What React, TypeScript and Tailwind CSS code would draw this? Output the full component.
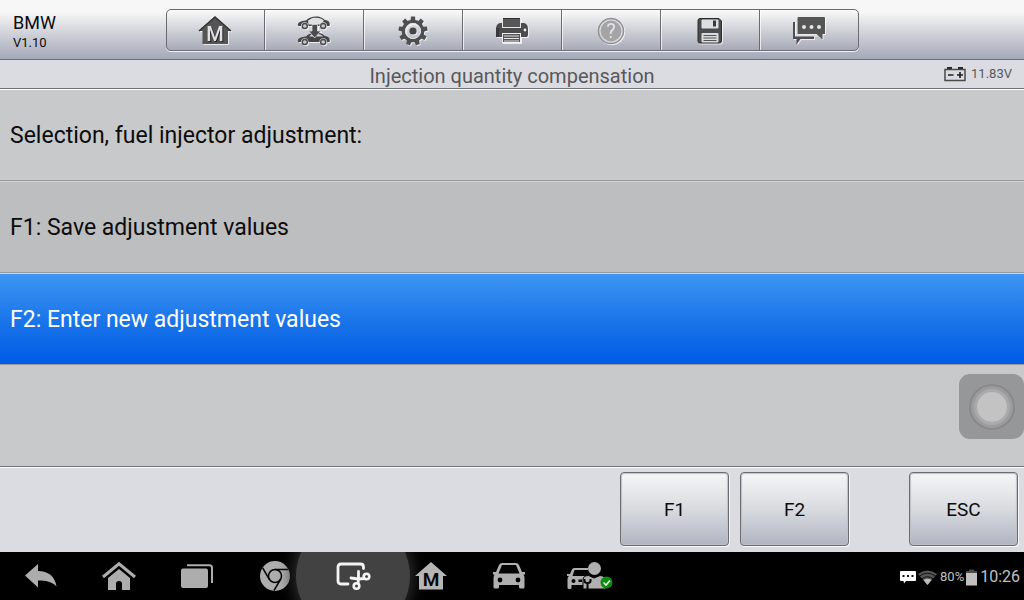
import { useState } from 'react'
import type { ReactNode } from 'react'
import clsx from 'clsx'

const GEAR_TEETH = [0, 40, 80, 120, 160, 200, 240, 280, 320]

/* ---------- toolbar icons ---------- */

function GarageIcon() {
  return (
    <svg width="34" height="30" viewBox="0 0 34 30">
      <path d="M17 1 L33 15 H30 V28 H4.500 V15 H1 Z" fill="#555556" />
      <path d="M1 15 L17 1 L33 15" fill="none" stroke="#2e2e2f" strokeWidth="1.500" />
      <text x="18" y="26" textAnchor="middle" fontSize="20" fontWeight="500" fill="#1f1f20">M</text>
      <text x="17" y="25" textAnchor="middle" fontSize="20" fontWeight="500" fill="#e2e2e6">M</text>
    </svg>
  )
}

function SmallCar({ y, filled }: { y: number; filled: boolean }) {
  return (
    <g transform={`translate(0 ${y})`}>
      <path
        d="M1 9.500 C0.500 6 4 5 9 4.500 C12 1.500 15 0.500 19 0.500 C24 0.500 26 2.500 28 4 C32 4.500 33.500 6.500 32.500 10 H30 A3.700 3.700 0 0 0 22.500 10 H11.500 A3.700 3.700 0 0 0 4 10 H1.500 Z"
        fill="#454546"
      />
      {filled ? (
        <path d="M12 4.500 C14 2.500 16 2 18 2 V4.500 Z M20 2 C23 2 25 3 26 4.500 H20 Z" fill="#d3d4d8" />
      ) : (
        <path d="M11 4.800 C14 2.200 16 1.800 18.500 1.800 C23 1.800 25 3 27 4.800 L23 8.500 H11.500 Z" fill="#dfe0e2" />
      )}
      <circle cx="7.800" cy="10" r="2.500" fill="#c9cad0" stroke="#4a4a4b" strokeWidth="1.400" />
      <circle cx="26.200" cy="10" r="2.500" fill="#c9cad0" stroke="#4a4a4b" strokeWidth="1.400" />
    </g>
  )
}

function SwapCarIcon() {
  return (
    <svg width="34" height="30" viewBox="0 0 34 30">
      <SmallCar y={0} filled={false} />
      <SmallCar y={16} filled />
      <path
        d="M15 8.500 H20.500 V15 H24 L17.700 22 L11.500 15 H15 Z"
        fill="#4c4c4d"
        stroke="#dcdde0"
        strokeWidth="0.800"
      />
    </svg>
  )
}

function GearIcon() {
  return (
    <svg width="32" height="32" viewBox="0 0 32 32">
      {GEAR_TEETH.map(a => (
        <path key={a} d="M14 1.500 H18 L18.600 7 H13.400 Z" fill="#4f4f50" transform={`rotate(${a} 16 16)`} />
      ))}
      <circle cx="16" cy="16" r="9.600" fill="none" stroke="#4f4f50" strokeWidth="3.400" />
      <circle cx="16" cy="16" r="7.500" fill="none" stroke="#e4e5e8" strokeWidth="1" />
      <circle cx="16" cy="16" r="3.600" fill="#454546" />
    </svg>
  )
}

function PrinterIcon() {
  return (
    <svg width="34" height="28" viewBox="0 0 34 28">
      <path d="M5 6 H29 Q33 7 33 12 V18 Q33 20 31 20 H3 Q1 20 1 18 V12 Q1 7 5 6 Z" fill="#4b4b4c" />
      <path d="M1 11 H4 V20 H1 Z" fill="#39393a" />
      <rect x="7.500" y="1.500" width="18" height="9" fill="#565657" stroke="#e6e6e9" />
      <path d="M8 1.500 H25" stroke="#2f2f30" />
      <rect x="7.500" y="16.500" width="18" height="9" fill="#555556" stroke="#f0f0f2" />
      <path d="M9 19 H24 M9 21.500 H24 M9 24 H24" stroke="#e2e3e6" />
      <circle cx="30" cy="13" r="1.400" fill="#ededf0" />
    </svg>
  )
}

function HelpIcon() {
  return (
    <svg width="30" height="30" viewBox="0 0 30 30">
      <circle cx="15" cy="15" r="12.800" fill="#a4a4a6" stroke="#8c8c8f" />
      <circle cx="15" cy="15" r="11" fill="none" stroke="#dcdcdf" strokeWidth="1.200" />
      <text x="15" y="22" textAnchor="middle" fontSize="20" fill="#e4e4e6">?</text>
    </svg>
  )
}

function SaveIcon() {
  return (
    <svg width="26" height="28" viewBox="0 0 26 28">
      <path d="M3 1.500 H22 L24.500 4 V24 Q24.500 26 22.500 26 H3 Q1 26 1 24 V3.500 Q1 1.500 3 1.500 Z" fill="#4c4c4d" stroke="#2c2c2d" strokeWidth="1" />
      <rect x="4.500" y="2.500" width="17" height="9" rx="1" fill="#dedfe1" />
      <rect x="16" y="3.500" width="3" height="6" fill="#3b3b3c" />
      <rect x="4.500" y="16" width="17" height="9.500" rx="1" fill="#d9dadd" />
      <path d="M6.500 18.500 H19.500 M6.500 21 H19.500 M6.500 23.500 H19.500" stroke="#545455" />
    </svg>
  )
}

function MessageIcon() {
  return (
    <svg width="34" height="30" viewBox="0 0 34 30">
      <path d="M1 6 H3 V20.500 H22 V23 H8.500 L4.500 28.500 V23 H1 Z" fill="#4f4f50" />
      <path d="M6.500 1 H32 Q33 1 33 2 V18 H30.500 V23.500 L24.500 18 H5.500 V2 Q5.500 1 6.500 1 Z" fill="#555556" />
      <path d="M4.500 4 V19 H24.500" fill="none" stroke="#e3e3e6" />
      <circle cx="12" cy="11" r="2" fill="#e4e4e7" />
      <circle cx="19.500" cy="11" r="2" fill="#e4e4e7" />
      <circle cx="27" cy="11" r="2" fill="#e4e4e7" />
    </svg>
  )
}

function VoltageIcon() {
  return (
    <svg width="22" height="15" viewBox="0 0 22 15">
      <rect x="3" y="0" width="5" height="2" fill="#262626" />
      <rect x="14" y="0" width="5" height="2" fill="#262626" />
      <rect x="1" y="2.500" width="20" height="11" fill="none" stroke="#4a4a46" strokeWidth="1.500" />
      <path d="M4 8 H9.500 M13 8 H19 M16 5 V11" stroke="#1c1c1c" strokeWidth="1.600" />
    </svg>
  )
}

/* ---------- system bar icons ---------- */

function BackIcon() {
  return (
    <svg width="34" height="26" viewBox="0 0 34 26">
      <path d="M14 1 V8 C24 8 31 13 32.500 23.500 C28 18.500 22 17.500 14 17.500 V24.500 L1 12.500 Z" fill="#adadad" />
    </svg>
  )
}

function HomeIcon() {
  return (
    <svg width="36" height="30" viewBox="0 0 36 30">
      <path d="M2 16 L18 2.800 L34 16" fill="none" stroke="#adadad" strokeWidth="3" />
      <path d="M18 8 L29 17 V29 H21 V23 A3 3 0 0 0 15 23 V29 H7 V17 Z" fill="#adadad" />
    </svg>
  )
}

function RecentsIcon() {
  return (
    <svg width="34" height="26" viewBox="0 0 34 26">
      <rect x="1" y="5.500" width="27" height="19.500" rx="2" fill="#adadad" />
      <path d="M7 2.200 H29.500 Q32 2.200 32 4.700 V20" fill="none" stroke="#adadad" strokeWidth="2" />
    </svg>
  )
}

function BrowserIcon() {
  return (
    <svg width="32" height="32" viewBox="0 0 32 32">
      <circle cx="16" cy="16" r="15" fill="#adadad" />
      <circle cx="16" cy="16" r="6.500" fill="#adadad" stroke="#050505" strokeWidth="1.500" />
      <path d="M16 9.500 H29.500 M10.300 19.300 L3.700 8 M21.600 19.300 L15 30.500" stroke="#050505" strokeWidth="1.500" />
    </svg>
  )
}

function SnipIcon() {
  return (
    <svg width="36" height="30" viewBox="0 0 36 30">
      <g fill="none" stroke="#f4f4f4" strokeWidth="2.800" strokeLinecap="round">
        <path d="M13 23 H6 Q3 23 3 20 V6 Q3 3 6 3 H25.500 Q28.500 3 28.500 6 V7.500" />
        <path d="M16 17 L23.500 18 L29.500 17.500" />
        <path d="M23.500 10.500 V18 L23 22.500" />
        <circle cx="31.500" cy="15.500" r="2.800" strokeWidth="2.600" />
        <circle cx="21.500" cy="25" r="2.800" strokeWidth="2.600" />
      </g>
    </svg>
  )
}

function NavGarageIcon() {
  return (
    <svg width="34" height="30" viewBox="0 0 34 30">
      <path d="M17 1 L33 15 H29 V28.500 H5 V15 H1 Z" fill="#b5b5b5" />
      <text x="17" y="25" textAnchor="middle" fontSize="19" fontWeight="600" fill="#050505">M</text>
    </svg>
  )
}

function CarIcon() {
  return (
    <svg width="34" height="28" viewBox="0 0 34 28">
      <path
        d="M10 1 H24 Q26 1 27 3 L30 10 H33 V12.500 H31.500 Q32.500 14 32.500 16 V25 Q32.500 26.500 31 26.500 H28.500 Q27 26.500 27 25 V23 H7 V25 Q7 26.500 5.500 26.500 H3 Q1.500 26.500 1.500 25 V16 Q1.500 14 2.500 12.500 H1 V10 H4 L7 3 Q8 1 10 1 Z"
        fill="#b0b0b0"
      />
      <path d="M10 3 H24 L27.500 11.500 H6.500 Z" fill="#050505" />
      <circle cx="8" cy="18" r="2.400" fill="#050505" />
      <circle cx="26" cy="18" r="2.400" fill="#050505" />
    </svg>
  )
}

function TechnicianIcon() {
  return (
    <svg width="48" height="30" viewBox="0 0 48 30">
      <path
        d="M8 7 H22 V27 H18 V24 H5.500 V26.500 Q5.500 28 4 28 H3 Q1.500 28 1.500 26.500 V18 Q1.500 16 3 15 H1 V13 H4 L6 8.500 Q6.700 7 8 7 Z"
        fill="#b0b0b0"
      />
      <path d="M8.500 9 H22 V15 H6.500 Z" fill="#050505" />
      <circle cx="7.500" cy="20" r="2" fill="#050505" />
      <path d="M12.500 18.500 H16 V21 H12.500 Z" fill="#050505" />
      <path d="M17 28 V19 Q17 14.500 22.500 14.500 L28 17 L34 14.500 Q40 15 40 20 V28 Z" fill="#b0b0b0" stroke="#050505" strokeWidth="1" />
      <circle cx="28.500" cy="7.500" r="6.500" fill="#b0b0b0" />
      <path d="M18.500 18 V20 Q18.500 22 21.500 22 Q24.500 22 24.500 20 V18 M21.500 22 V29" fill="none" stroke="#050505" strokeWidth="2" />
      <circle cx="40.500" cy="21.500" r="6" fill="#0d8a12" />
      <path d="M37.500 21.500 L40 24 L44 19.500" fill="none" stroke="#e5efe5" strokeWidth="1.600" />
    </svg>
  )
}

function BubbleIcon() {
  return (
    <svg width="16" height="14" viewBox="0 0 16 14">
      <path d="M1 1 H15 Q16 1 16 2 V10 Q16 11 15 11 H6 L4 13.500 L3.500 11 H1 Q0 11 0 10 V2 Q0 1 1 1 Z" fill="#fff" />
      <path d="M2.500 5 H4.500 V7 H2.500 Z M7 5 H9 V7 H7 Z M11.500 5 H13.500 V7 H11.500 Z" fill="#111" />
    </svg>
  )
}

function WifiIcon() {
  return (
    <svg width="19" height="15" viewBox="0 0 19 15">
      <path d="M0 4 Q9.500 -3 19 4 L9.500 15 Z" fill="#555" />
      <path d="M5.500 10 Q9.500 7.500 13.500 10 L9.500 15 Z" fill="#bdbdbd" />
      <path d="M1.500 6 Q9.500 0.500 17.500 6 M3.500 9 Q9.500 4.500 15.500 9" fill="none" stroke="#0a0a0a" strokeWidth="0.900" />
    </svg>
  )
}

function BatteryIcon() {
  return (
    <svg width="11" height="17" viewBox="0 0 11 17">
      <path d="M3 0.500 H8 V2 H11 V5 H0 V2 H3 Z" fill="#4a4a4a" />
      <rect x="0" y="4" width="11" height="12.500" fill="#c0c0c0" />
    </svg>
  )
}

/* ---------- data ---------- */

interface IconAction {
  label: string
  icon: ReactNode
  disabled?: boolean
}

const toolbar: IconAction[] = [
  { label: 'Home', icon: <GarageIcon /> },
  { label: 'Vehicle swap', icon: <SwapCarIcon /> },
  { label: 'Settings', icon: <GearIcon /> },
  { label: 'Print', icon: <PrinterIcon /> },
  { label: 'Help', icon: <HelpIcon />, disabled: true },
  { label: 'Save', icon: <SaveIcon /> },
  { label: 'Data logging', icon: <MessageIcon /> },
]

const systemApps: IconAction[] = [
  { label: 'Back', icon: <BackIcon /> },
  { label: 'Android home', icon: <HomeIcon /> },
  { label: 'Recent apps', icon: <RecentsIcon /> },
  { label: 'Browser', icon: <BrowserIcon /> },
  { label: 'Screenshot', icon: <SnipIcon /> },
  { label: 'Main menu', icon: <NavGarageIcon /> },
  { label: 'Vehicle', icon: <CarIcon /> },
  { label: 'Service', icon: <TechnicianIcon /> },
]

const options = ['F1: Save adjustment values', 'F2: Enter new adjustment values']

/* ---------- layout ---------- */

function FunctionKey({ label, onClick }: { label: string; onClick?: () => void }) {
  return (
    <button
      onClick={onClick}
      className="h-[74px] w-[109px] rounded-[4px] border border-[#6c6c70] bg-linear-to-b from-[#f5f6f7] via-[#d9dbe0] to-[#b0b4c0] pt-[2px] text-[19px] text-[#0c0c0c] shadow-[1px_1px_0_#f6f6f8,inset_0_0_1px_1px_#bfc0c6]"
    >
      {label}
    </button>
  )
}

function TopBar() {
  return (
    <header className="grid h-[60px] grid-cols-[1fr_auto_1fr] items-center border-b border-[#6a6c76] bg-linear-to-b from-[#f7f7f7] from-20% to-[#a5a8b7]">
      <div className="pt-[6px] pl-[13px] text-[#0c0c0c]">
        <div className="text-[18px] leading-5">BMW</div>
        <div className="text-[13px] leading-5">V1.10</div>
      </div>
      <div className="flex divide-x divide-[#6a6c72] overflow-hidden rounded-[5px] border border-[#6a6c72] bg-linear-to-b from-[#fbfbfb] to-[#a7aab7] shadow-[0_1px_0_#f4f4f6]">
        {toolbar.map(item => (
          <button
            key={item.label}
            aria-label={item.label}
            disabled={item.disabled}
            className="flex h-10 w-[99px] items-center justify-center pt-[2px] drop-shadow-[1px_1px_0_rgba(255,255,255,0.7)] first:w-[98px] last:w-[98px]"
          >
            {item.icon}
          </button>
        ))}
      </div>
    </header>
  )
}

export default function App() {
  const [selected, setSelected] = useState(1)

  return (
    <div className="flex min-h-screen flex-col bg-[#c8c9cb] font-[Roboto,sans-serif]">
      <TopBar />

      <div className="grid h-[29px] grid-cols-[1fr_auto_1fr] items-center border-b border-[#6f7178] bg-[#dbdce1]">
        <h1 className="col-start-2 pt-1 text-[20px] leading-6 text-[#58585a]">Injection quantity compensation</h1>
        <div className="flex items-center justify-end gap-[5px] pr-3 text-[13px] leading-4 text-[#58585a]">
          <VoltageIcon />
          11.83V
        </div>
      </div>

      <main className="relative flex-1">
        <div className="flex h-[92px] items-center border-y border-t-white border-b-[#98999b] px-[10px] pt-[2px] text-[23px] text-[#0c0c0c]">
          Selection, fuel injector adjustment:
        </div>
        {options.map((text, i) => (
          <button
            key={text}
            onClick={() => setSelected(i)}
            aria-pressed={selected === i}
            className={clsx(
              'flex h-[92px] w-full items-center border-y border-t-[#d3d4d6] border-b-[#98999b] px-[10px] pt-[2px] text-left text-[23px]',
              selected === i
                ? 'bg-linear-to-b from-[#3d96f3] via-[#1b76ea] to-[#005be6] text-white'
                : 'bg-[#bdbec0] text-[#0c0c0c]'
            )}
          >
            {text}
          </button>
        ))}

        {/* floating assist button */}
        <button
          aria-label="Assist"
          className="absolute right-0 bottom-[27px] flex size-[65px] items-center justify-center rounded-[11px] bg-[#969799]"
        >
          <span className="flex size-[46px] items-center justify-center rounded-full border-2 border-[#89898b] bg-[#9c9c9e]">
            <span className="size-[36px] rounded-full border-3 border-[#aaaaab] bg-[#c3c3c4]" />
          </span>
        </button>
      </main>

      <footer className="flex justify-end border-t border-[#6f7178] bg-[#dbdce1] px-[6px] pt-[5px] pb-[6px] shadow-[inset_0_1px_0_#ffffff]">
        <div className="flex gap-[11px]">
          <FunctionKey label="F1" onClick={() => setSelected(0)} />
          <FunctionKey label="F2" onClick={() => setSelected(1)} />
        </div>
        <div className="pl-[60px]">
          <FunctionKey label="ESC" />
        </div>
      </footer>

      <nav className="flex h-12 items-center justify-between overflow-hidden bg-black pr-1 pl-[2px]">
        <div className="flex h-full">
          {systemApps.map(app => (
            <button
              key={app.label}
              aria-label={app.label}
              className="relative flex h-full w-[78px] items-center justify-center last:w-[84px]"
            >
              {app.label === 'Screenshot' && (
                <span className="absolute size-[114px] rounded-full bg-[#424242] shadow-[0_0_14px_4px_#2a2a2a]" />
              )}
              <span className="relative">{app.icon}</span>
            </button>
          ))}
        </div>
        <div className="flex items-center gap-[2px] pt-[2px] text-[#c0c0c0]">
          <BubbleIcon />
          <WifiIcon />
          <span className="pl-px text-[13px]">80%</span>
          <BatteryIcon />
          <span className="pl-px text-[16px]">10:26</span>
        </div>
      </nav>
    </div>
  )
}
